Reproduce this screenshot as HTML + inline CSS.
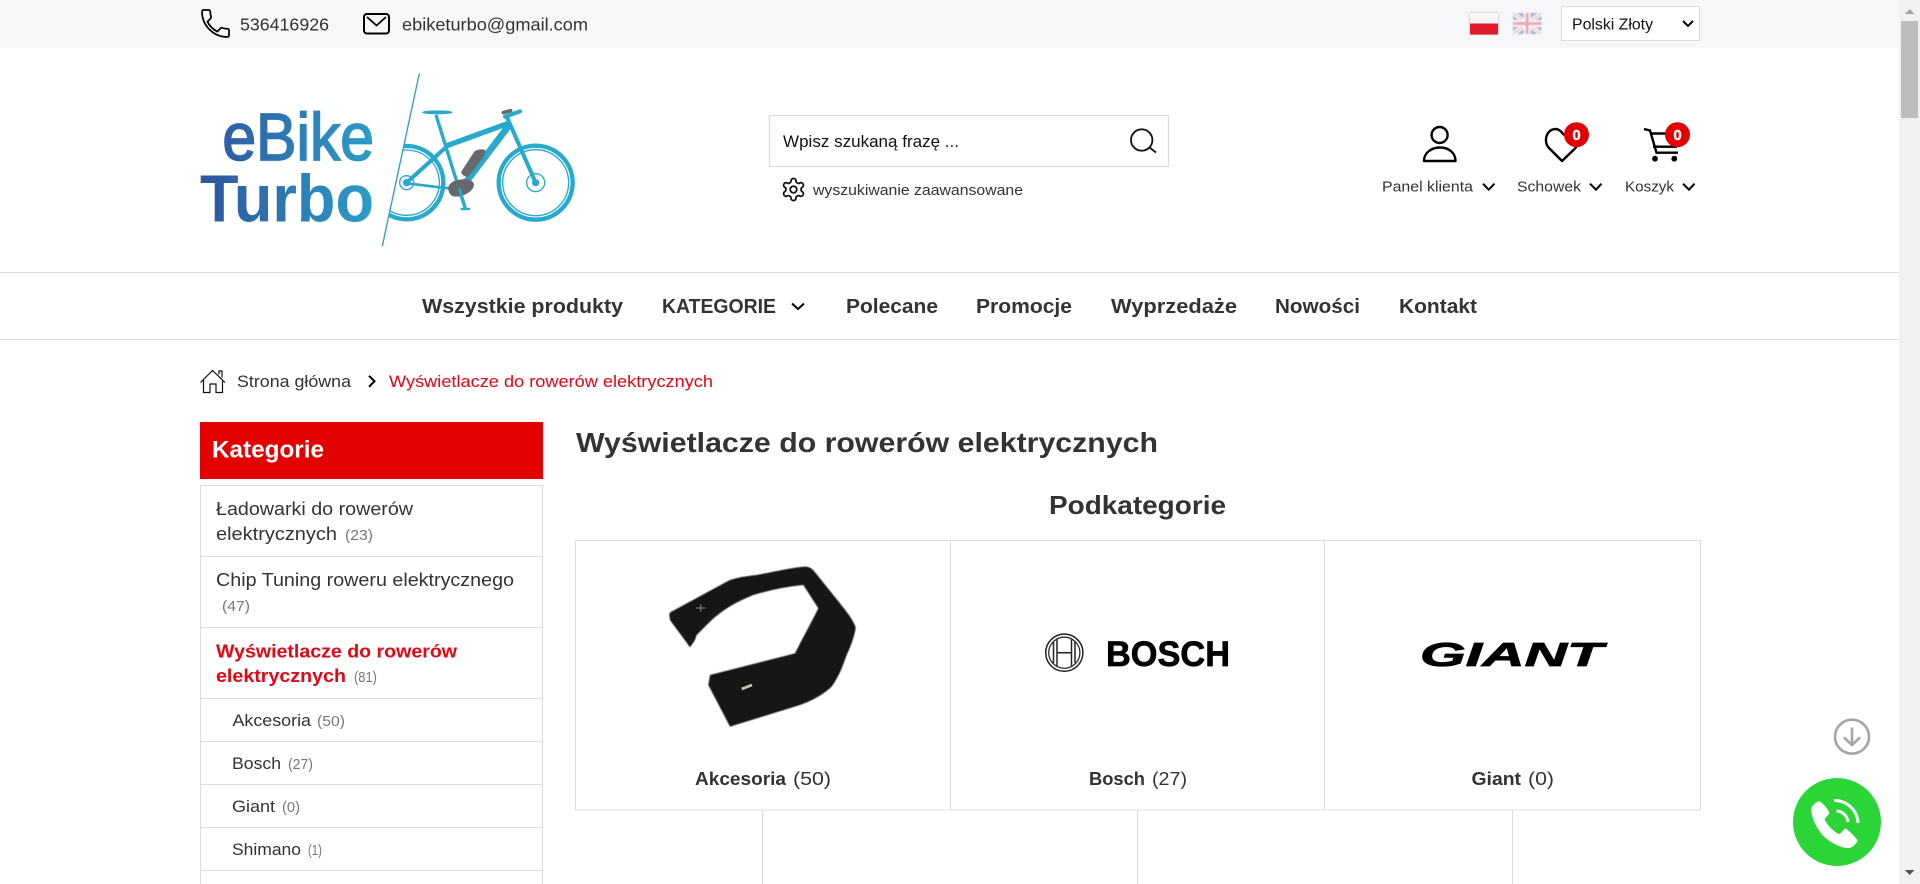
<!DOCTYPE html>
<html lang="pl">
<head>
<meta charset="utf-8">
<title>Wyświetlacze do rowerów elektrycznych - eBike Turbo</title>
<style>
html,body{margin:0;padding:0;width:1920px;height:884px;overflow:hidden;background:#fff}
svg{display:block;position:absolute;left:0;top:0}
text{font-family:"Liberation Sans","Noto Sans CJK SC",sans-serif;fill:#333}
.b{font-weight:700}
.l{fill:#dcdcdc}
.c{fill:#777}
.k{fill:#111}
.r{fill:#e30613}
.ch{fill:none;stroke:#000;stroke-width:2}
</style>
</head>
<body>
<svg width="1920" height="884" viewBox="0 0 1920 884" xmlns="http://www.w3.org/2000/svg">
<defs>
<linearGradient id="lg" gradientUnits="userSpaceOnUse" x1="30" y1="0" x2="552" y2="0"><stop offset="0" stop-color="#2f559d"/><stop offset="1" stop-color="#2b9dc8"/></linearGradient>
<clipPath id="rw"><polygon points="688,40 577,558 1200,558 1200,40"/></clipPath>
<filter id="sh" x="-20%" y="-20%" width="140%" height="140%"><feDropShadow dx="0" dy="0" stdDeviation="1" flood-color="#000" flood-opacity=".3"/></filter>
<filter id="bl"><feGaussianBlur stdDeviation="1.2"/></filter>
<filter id="fl"><feGaussianBlur stdDeviation=".6"/></filter>
</defs>

<!-- top bar -->
<rect x="0" y="0" width="1899" height="48" fill="#f6f7f9"/>
<g transform="translate(197.5,5.5) scale(1.5)"><path d="M6.62 10.79c1.44 2.83 3.76 5.14 6.59 6.59l2.2-2.2c.27-.27.67-.36 1.02-.24 1.12.37 2.33.57 3.57.57.55 0 1 .45 1 1V20c0 .55-.45 1-1 1-9.39 0-17-7.61-17-17 0-.55.45-1 1-1h3.5c.55 0 1 .45 1 1 0 1.25.2 2.45.57 3.57.11.35.03.74-.25 1.02l-2.2 2.2z" fill="none" stroke="#000" stroke-width="1.15"/></g>
<text x="240" y="30.5" font-size="17.5" textLength="89" lengthAdjust="spacingAndGlyphs">536416926</text>
<rect x="364" y="14" width="25" height="19.5" rx="3" fill="none" stroke="#000" stroke-width="2"/>
<polyline points="367,17 376.5,25.5 386,17" fill="none" stroke="#000" stroke-width="1.7"/>
<text x="402" y="30.5" font-size="17.5" textLength="186" lengthAdjust="spacingAndGlyphs">ebiketurbo@gmail.com</text>

<g filter="url(#sh)"><rect x="1470" y="13" width="28" height="10.5" fill="#f7f7f7"/><rect x="1470" y="23.5" width="28" height="11" fill="#e01c2c"/></g>
<g opacity=".36" filter="url(#fl)">
<rect x="1513" y="13" width="28.5" height="21" fill="#2b3f8c"/>
<path d="M1513 13l28.5 21M1541.5 13L1513 34" stroke="#fff" stroke-width="4"/>
<path d="M1513 13l28.5 21M1541.5 13L1513 34" stroke="#d8283c" stroke-width="1.3"/>
<path d="M1527.2 13v21M1513 23.5h28.5" stroke="#fff" stroke-width="6.5"/>
<path d="M1527.2 13v21M1513 23.5h28.5" stroke="#d8283c" stroke-width="3.5"/>
</g>

<rect x="1561.5" y="6.5" width="138" height="34" fill="#fff" stroke="#dcdcdc"/>
<text x="1572" y="29.3" font-size="15.5" class="k" textLength="81" lengthAdjust="spacingAndGlyphs">Polski Złoty</text>
<polyline points="1683,21 1688,26 1693,21" class="ch"/>

<!-- logo -->
<g transform="translate(190,60) scale(.33333)">
<line x1="688" y1="40" x2="577" y2="558" stroke="#2e9cc9" stroke-width="4"/>
<g clip-path="url(#rw)" fill="none" stroke="#27a9cd">
<circle cx="650" cy="368" r="110" stroke-width="13"/>
<circle cx="650" cy="368" r="98" stroke-width="4"/>
<circle cx="650" cy="368" r="21" stroke-width="4"/>
</g>
<g fill="none" stroke="#27a9cd">
<circle cx="1037" cy="368" r="111" stroke-width="13"/>
<circle cx="1037" cy="368" r="99" stroke-width="4"/>
<circle cx="1037" cy="368" r="27" stroke-width="4"/>
<line x1="650" y1="368" x2="772" y2="258" stroke-width="12"/>
<line x1="650" y1="370" x2="800" y2="388" stroke-width="8"/>
<line x1="738" y1="165" x2="808" y2="390" stroke-width="10"/>
<line x1="768" y1="258" x2="955" y2="190" stroke-width="16"/>
<line x1="958" y1="195" x2="825" y2="370" stroke-width="20"/>
<line x1="948" y1="165" x2="1037" y2="368" stroke-width="12"/>
<line x1="945" y1="170" x2="990" y2="154" stroke-width="12" stroke-linecap="round"/>
<line x1="806" y1="385" x2="826" y2="445" stroke-width="10"/>
<line x1="812" y1="447" x2="840" y2="447" stroke-width="7"/>
</g>
<circle cx="650" cy="368" r="11" fill="#27a9cd"/>
<circle cx="1037" cy="368" r="11" fill="#27a9cd"/>
<ellipse cx="742" cy="157" rx="46" ry="6" fill="#27a9cd"/>
<path d="M814 335L852 276C858 268 878 266 885 270C888 274 884 286 878 294L836 349C830 353 812 345 814 335Z" fill="#67686c"/>
<path d="M775 385C775 367 800 357 828 358C848 359 856 370 850 382C843 398 818 410 798 410C784 410 775 400 775 385Z" fill="#67686c"/>
<line x1="808" y1="385" x2="826" y2="445" stroke="#27a9cd" stroke-width="9"/>
<line x1="940" y1="158" x2="962" y2="152" stroke="#67686c" stroke-width="11" stroke-linecap="round"/>
<text x="97" y="300" font-size="200" textLength="455" lengthAdjust="spacingAndGlyphs" style="fill:url(#lg);stroke:url(#lg)" stroke-width="5">eBike</text>
<text x="30" y="485" font-size="200" class="b" textLength="522" lengthAdjust="spacingAndGlyphs" style="fill:url(#lg)">Turbo</text>
</g>

<!-- search -->
<rect x="769.5" y="115.5" width="399" height="51" fill="#fff" stroke="#dcdcdc" stroke-width="1.3"/>
<text x="783" y="147" font-size="16.5" class="k" textLength="176" lengthAdjust="spacingAndGlyphs">Wpisz szukaną frazę ...</text>
<circle cx="1141.7" cy="140" r="10.7" fill="none" stroke="#111" stroke-width="1.8"/>
<line x1="1149.5" y1="147.5" x2="1156" y2="152.5" stroke="#111" stroke-width="1.8"/>
<g transform="translate(780.3,176.3) scale(1.1)" fill="none" stroke="#111" stroke-width="1.6"><path d="M12.22 2h-.44a2 2 0 0 0-2 2v.18a2 2 0 0 1-1 1.73l-.43.25a2 2 0 0 1-2 0l-.15-.08a2 2 0 0 0-2.73.73l-.22.38a2 2 0 0 0 .73 2.73l.15.1a2 2 0 0 1 1 1.72v.51a2 2 0 0 1-1 1.74l-.15.09a2 2 0 0 0-.73 2.73l.22.38a2 2 0 0 0 2.73.73l.15-.08a2 2 0 0 1 2 0l.43.25a2 2 0 0 1 1 1.73V20a2 2 0 0 0 2 2h.44a2 2 0 0 0 2-2v-.18a2 2 0 0 1 1-1.73l.43-.25a2 2 0 0 1 2 0l.15.08a2 2 0 0 0 2.73-.73l.22-.39a2 2 0 0 0-.73-2.73l-.15-.08a2 2 0 0 1-1-1.74v-.5a2 2 0 0 1 1-1.74l.15-.09a2 2 0 0 0 .73-2.73l-.22-.38a2 2 0 0 0-2.73-.73l-.15.08a2 2 0 0 1-2 0l-.43-.25a2 2 0 0 1-1-1.73V4a2 2 0 0 0-2-2z"/><circle cx="12" cy="12" r="3"/></g>
<text x="813" y="195" font-size="15" textLength="210" lengthAdjust="spacingAndGlyphs">wyszukiwanie zaawansowane</text>

<!-- header icons -->
<circle cx="1439.6" cy="135" r="8" fill="none" stroke="#000" stroke-width="2.4"/>
<path d="M1424 161C1424 153 1431 147.5 1440 147.5S1455.5 153 1455.5 161Z" fill="none" stroke="#000" stroke-width="2.4" stroke-linejoin="round"/>
<path d="M1562 161L1549 148C1543 142 1546 129.5 1555.5 129C1559 129 1561 131 1563 134L1575 140C1578 144 1577 147 1574 149.5Z" fill="none" stroke="#000" stroke-width="2.4" stroke-linejoin="round"/>
<circle cx="1576.5" cy="134.7" r="12.5" fill="#e30000"/>
<text x="1576.5" y="140" font-size="15" class="b" text-anchor="middle" style="fill:#fff;stroke:#fff" stroke-width=".4">0</text>
<path d="M1644 129L1650 130.5L1656.5 152.7H1678M1651 133.5H1678M1653 146.7H1677" fill="none" stroke="#000" stroke-width="2.4"/>
<circle cx="1655" cy="158.7" r="2.9"/><circle cx="1674.3" cy="158.7" r="2.9"/>
<circle cx="1677.5" cy="134.7" r="12.5" fill="#e30000"/>
<text x="1677.5" y="140" font-size="15" class="b" text-anchor="middle" style="fill:#fff;stroke:#fff" stroke-width=".4">0</text>
<text x="1382" y="191.7" font-size="15" textLength="91" lengthAdjust="spacingAndGlyphs">Panel klienta</text>
<polyline points="1483,183.7 1488.7,189.7 1494.5,183.7" class="ch"/>
<text x="1517" y="191.7" font-size="15" textLength="64" lengthAdjust="spacingAndGlyphs">Schowek</text>
<polyline points="1590,183.7 1596,189.7 1601.5,183.7" class="ch"/>
<text x="1625" y="191.7" font-size="15" textLength="49" lengthAdjust="spacingAndGlyphs">Koszyk</text>
<polyline points="1683,183.7 1689,189.7 1694.5,183.7" class="ch"/>

<!-- nav -->
<rect x="0" y="272" width="1899" height="1" class="l"/>
<rect x="0" y="339" width="1899" height="1" class="l"/>
<g font-size="20" class="b">
<text x="422" y="313" textLength="201" lengthAdjust="spacingAndGlyphs">Wszystkie produkty</text>
<text x="662" y="313" textLength="114" lengthAdjust="spacingAndGlyphs">KATEGORIE</text>
<text x="846" y="313" textLength="92" lengthAdjust="spacingAndGlyphs">Polecane</text>
<text x="976" y="313" textLength="96" lengthAdjust="spacingAndGlyphs">Promocje</text>
<text x="1111" y="313" textLength="126" lengthAdjust="spacingAndGlyphs">Wyprzedaże</text>
<text x="1275" y="313" textLength="85" lengthAdjust="spacingAndGlyphs">Nowości</text>
<text x="1399" y="313" textLength="78" lengthAdjust="spacingAndGlyphs">Kontakt</text>
</g>
<polyline points="792,303.5 798,309 804,303.5" class="ch"/>

<!-- breadcrumb -->
<g fill="none" stroke="#111" stroke-width="1.2">
<path d="M200.5 382.5L212.5 370.5L225 382.5M203.5 379.5V392.5H210V384H216V392.5H222.5V379.5M219 374.5V371H222V377.5"/>
</g>
<text x="237" y="386.8" font-size="16.5" textLength="114" lengthAdjust="spacingAndGlyphs">Strona główna</text>
<polyline points="369,375.8 374.5,381.3 369,386.8" class="ch"/>
<text x="389" y="386.8" font-size="16.5" class="r" textLength="324" lengthAdjust="spacingAndGlyphs">Wyświetlacze do rowerów elektrycznych</text>

<!-- sidebar -->
<rect x="200" y="422" width="343" height="57" fill="#e30000"/>
<text x="212" y="457.3" font-size="24" class="b" style="fill:#fff" textLength="112" lengthAdjust="spacingAndGlyphs">Kategorie</text>
<rect x="200.5" y="485.5" width="342" height="410" fill="#fff" stroke="#dcdcdc"/>
<rect x="200" y="556" width="343" height="1" class="l"/>
<rect x="200" y="627" width="343" height="1" class="l"/>
<rect x="200" y="698" width="343" height="1" class="l"/>
<rect x="200" y="741" width="343" height="1" class="l"/>
<rect x="200" y="784" width="343" height="1" class="l"/>
<rect x="200" y="827" width="343" height="1" class="l"/>
<rect x="200" y="870" width="343" height="1" class="l"/>
<text x="216" y="515" font-size="18" textLength="197" lengthAdjust="spacingAndGlyphs">Ładowarki do rowerów</text>
<text x="216" y="540" font-size="18" textLength="121" lengthAdjust="spacingAndGlyphs">elektrycznych</text>
<text x="345" y="540" font-size="15" class="c" textLength="28" lengthAdjust="spacingAndGlyphs">(23)</text>
<text x="216" y="586" font-size="18" textLength="298" lengthAdjust="spacingAndGlyphs">Chip Tuning roweru elektrycznego</text>
<text x="222" y="611" font-size="15" class="c" textLength="28" lengthAdjust="spacingAndGlyphs">(47)</text>
<text x="216" y="657.5" font-size="18" class="b r" textLength="241" lengthAdjust="spacingAndGlyphs">Wyświetlacze do rowerów</text>
<text x="216" y="682" font-size="18" class="b r" textLength="130" lengthAdjust="spacingAndGlyphs">elektrycznych</text>
<text x="354" y="682" font-size="15" class="c" textLength="23" lengthAdjust="spacingAndGlyphs">(81)</text>
<text x="232.5" y="726" font-size="16.5" textLength="78.5" lengthAdjust="spacingAndGlyphs">Akcesoria</text>
<text x="317" y="726" font-size="14.5" class="c" textLength="28" lengthAdjust="spacingAndGlyphs">(50)</text>
<text x="232" y="769" font-size="16.5" textLength="49" lengthAdjust="spacingAndGlyphs">Bosch</text>
<text x="288" y="769" font-size="14.5" class="c" textLength="25" lengthAdjust="spacingAndGlyphs">(27)</text>
<text x="232" y="812" font-size="16.5" textLength="43" lengthAdjust="spacingAndGlyphs">Giant</text>
<text x="282" y="812" font-size="14.5" class="c" textLength="18" lengthAdjust="spacingAndGlyphs">(0)</text>
<text x="232" y="855" font-size="16.5" textLength="69" lengthAdjust="spacingAndGlyphs">Shimano</text>
<text x="308" y="855" font-size="14.5" class="c" textLength="14" lengthAdjust="spacingAndGlyphs">(1)</text>

<!-- main -->
<text x="576" y="452" font-size="28" class="b" textLength="582" lengthAdjust="spacingAndGlyphs">Wyświetlacze do rowerów elektrycznych</text>
<text x="1049" y="514" font-size="26" class="b" textLength="177" lengthAdjust="spacingAndGlyphs">Podkategorie</text>
<rect x="575.5" y="540.5" width="1125" height="269.5" fill="none" stroke="#dcdcdc"/>
<rect x="950" y="540" width="1" height="270" class="l"/>
<rect x="1324" y="540" width="1" height="270" class="l"/>
<rect x="762" y="810" width="1" height="74" class="l"/>
<rect x="1137" y="810" width="1" height="74" class="l"/>
<rect x="1512" y="810" width="1" height="74" class="l"/>

<!-- product image -->
<g transform="translate(640,540) scale(.33333)">
<path d="M88 225C88 218 92 216 100 212L262 124C280 114 320 108 350 105C400 96 460 82 496 80C510 80 518 88 526 98L600 190C620 215 640 240 647 262C645 285 632 320 620 345C606 385 596 410 575 440C550 465 510 485 480 495L270 560L205 435L210 405L465 340C490 290 515 245 535 205L490 135C440 140 390 150 340 165C290 185 245 210 205 250L170 285L165 300L150 322C135 300 105 262 90 240Z" fill="#161614" filter="url(#bl)"/>
<path d="M168 204H196M182 193V215" stroke="#77776a" stroke-width="4"/>
<path d="M305 447L336 435" stroke="#c5c5b0" stroke-width="8"/>
</g>

<!-- Bosch logo -->
<circle cx="1064.3" cy="652.7" r="18.6" fill="none" stroke="#222" stroke-width="1.5"/>
<circle cx="1064.3" cy="652.7" r="15.6" fill="none" stroke="#222" stroke-width="1.2"/>
<path d="M1057 639V666M1071.5 639V666M1057 652.7H1071.5M1053.5 642V663M1075 642V663" fill="none" stroke="#222" stroke-width="1.5"/>
<text x="1106" y="666" font-size="35" class="b" style="fill:#000;stroke:#000" stroke-width=".7" textLength="124" lengthAdjust="spacingAndGlyphs">BOSCH</text>
<!-- Giant logo -->
<text x="1420" y="666" font-size="33" class="b" font-style="italic" style="fill:#000;stroke:#000" stroke-width=".8" textLength="183" lengthAdjust="spacingAndGlyphs">GIANT</text>

<!-- labels -->
<text x="695" y="785" font-size="18" class="b" textLength="91" lengthAdjust="spacingAndGlyphs">Akcesoria</text>
<text x="793" y="785" font-size="18" textLength="38" lengthAdjust="spacingAndGlyphs">(50)</text>
<text x="1089" y="785" font-size="18" class="b" textLength="56" lengthAdjust="spacingAndGlyphs">Bosch</text>
<text x="1152" y="785" font-size="18" textLength="35" lengthAdjust="spacingAndGlyphs">(27)</text>
<text x="1471.5" y="785" font-size="18" class="b" textLength="49.5" lengthAdjust="spacingAndGlyphs">Giant</text>
<text x="1528" y="785" font-size="18" textLength="26" lengthAdjust="spacingAndGlyphs">(0)</text>

<!-- floating -->
<circle cx="1852" cy="736.7" r="17" fill="#fff" stroke="#a5a5a5" stroke-width="2.6"/>
<path d="M1852 727.5V745M1844 737.5L1852 745L1860 737.5" fill="none" stroke="#a5a5a5" stroke-width="2.6"/>
<circle cx="1837" cy="822" r="44" fill="#2bd537"/>
<g transform="translate(1760,690) scale(.33333)"><path d="M176 334C170 334 158 345 154 353C151 372 165 410 190 438C215 462 252 478 272 473C280 470 290 460 293 452C293 448 265 420 258 416C252 414 245 430 238 432C225 430 197 400 194 388C195 382 208 375 208 368C206 360 186 334 176 334Z" fill="#fff"/></g>
<path d="M1834 800.5A23.5 23.5 0 0 1 1858 823M1836.5 811A12 12 0 0 1 1848 822" fill="none" stroke="#fff" stroke-width="3"/>

<!-- scrollbar -->
<rect x="1899" y="0" width="21" height="884" fill="#f1f1f1"/>
<rect x="1901" y="21" width="17" height="97" fill="#bdbdbd"/>
<polygon points="1909.7,9 1914.5,14 1905,14" fill="#a3a3a3"/>
<polygon points="1905,870 1914.5,870 1909.7,875" fill="#505050"/>
</svg>
</body>
</html>
